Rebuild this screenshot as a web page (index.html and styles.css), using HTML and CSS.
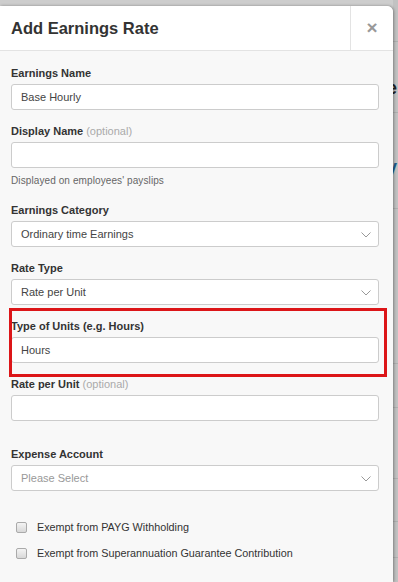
FILE: index.html
```html
<!DOCTYPE html>
<html lang="en">
<head>
    <meta charset="UTF-8">
    <meta name="viewport" content="width=device-width, initial-scale=1.0">
    <title>Add Earnings Rate</title>
    <link rel="stylesheet" href="styles.css">
</head>
<body>
    <div class="page">
        <div class="modal">
            <div class="modal-header">
                <h2>Add Earnings Rate</h2>
                <button class="close">&times;</button>
            </div>
            <div class="modal-body">
                <div class="field">
                    <label>Earnings Name</label>
                    <div class="input">Base Hourly</div>
                </div>
                <div class="field">
                    <label>Display Name <span class="optional">(optional)</span></label>
                    <div class="input"></div>
                    <p class="help">Displayed on employees' payslips</p>
                </div>
                <div class="field">
                    <label>Earnings Category</label>
                    <div class="input select">
                        <span>Ordinary time Earnings</span>
                        <svg class="chevron" width="10" height="6" viewBox="0 0 10 6"><path d="M0.5 0.5 L5 5 L9.5 0.5" fill="none" stroke="#999" stroke-width="1"/></svg>
                    </div>
                </div>
                <div class="field">
                    <label>Rate Type</label>
                    <div class="input select">
                        <span>Rate per Unit</span>
                        <svg class="chevron" width="10" height="6" viewBox="0 0 10 6"><path d="M0.5 0.5 L5 5 L9.5 0.5" fill="none" stroke="#999" stroke-width="1"/></svg>
                    </div>
                </div>
                <div class="field highlight">
                    <label>Type of Units (e.g. Hours)</label>
                    <div class="input">Hours</div>
                </div>
                <div class="field">
                    <label>Rate per Unit <span class="optional">(optional)</span></label>
                    <div class="input"></div>
                </div>
                <div class="field spaced">
                    <label>Expense Account</label>
                    <div class="input select placeholder">
                        <span>Please Select</span>
                        <svg class="chevron" width="10" height="6" viewBox="0 0 10 6"><path d="M0.5 0.5 L5 5 L9.5 0.5" fill="none" stroke="#999" stroke-width="1"/></svg>
                    </div>
                </div>
                <div class="checks">
                    <div class="check"><span class="box"></span>Exempt from PAYG Withholding</div>
                    <div class="check"><span class="box"></span>Exempt from Superannuation Guarantee Contribution</div>
                </div>
            </div>
        </div>
        <div class="backdrop">
            <div class="row r1"><span class="peek">e</span></div>
            <div class="row r2"><span class="peek blue">y</span></div>
            <div class="row r3"></div>
            <div class="row r4"></div>
            <div class="row r5"></div>
            <div class="row r6"></div>
            <div class="row r7"></div>
            <div class="row r8"></div>
        </div>
    </div>
</body>
</html>
```

FILE: styles.css
```css
body {
    margin: 0;
    background: #cdcdcd;
    font-family: "Liberation Sans", Arial, sans-serif;
    color: #333;
    overflow: hidden;
}
.page {
    display: flex;
    height: 582px;
}
.modal {
    width: 393px;
    flex: none;
    margin-top: 6px;
    background: #f8f8f8;
    border-radius: 0 6px 0 0;
    box-shadow: 1px 0 3px rgba(0, 0, 0, 0.35);
    position: relative;
    z-index: 1;
}
.modal-header {
    display: flex;
    height: 44px;
    background: #fff;
    border-bottom: 1px solid #e3e3e3;
    border-radius: 0 6px 0 0;
}
.modal-header h2 {
    flex: 1;
    margin: 0;
    padding-left: 11px;
    font-size: 16.5px;
    line-height: 44px;
    font-weight: bold;
    color: #333;
}
.close {
    width: 43px;
    border: none;
    border-left: 1px solid #e3e3e3;
    background: none;
    font-family: "Liberation Sans", Arial, sans-serif;
    font-size: 19px;
    font-weight: bold;
    color: #999;
    padding: 0;
    line-height: 44px;
}
.modal-body {
    padding: 14px 14px 0 11px;
}
.field {
    margin-bottom: 13px;
}
.field.spaced {
    margin-top: 25px;
}
label {
    display: block;
    font-size: 11px;
    font-weight: bold;
    line-height: 16px;
    margin-bottom: 3px;
    color: #333;
}
.optional {
    font-weight: normal;
    color: #aaa;
}
.input {
    display: flex;
    align-items: center;
    justify-content: space-between;
    box-sizing: border-box;
    height: 26px;
    padding: 0 7px 0 9px;
    background: #fff;
    border: 1px solid #ccc;
    border-radius: 3px;
    font-size: 11px;
    color: #444;
}
.placeholder {
    color: #999;
}
.chevron {
    margin-top: 1px;
}
.help {
    margin: 5px 0 0;
    font-size: 10px;
    line-height: 16px;
    letter-spacing: 0.1px;
    color: #666;
}
.highlight {
    position: relative;
}
.highlight::after {
    content: "";
    position: absolute;
    left: -2px;
    top: -10px;
    right: -8px;
    bottom: -14px;
    border: 3px solid #dc1518;
    pointer-events: none;
}
.checks {
    padding: 15px 0 0 5px;
}
.check {
    display: flex;
    align-items: center;
    font-size: 10.8px;
    line-height: 16px;
    color: #333;
    margin-bottom: 10px;
}
.box {
    width: 9px;
    height: 9px;
    margin-right: 10px;
    border: 1px solid #aaa;
    border-radius: 2px;
    background: linear-gradient(#f4f4f4, #d8d8d8);
}
.backdrop {
    flex: 1;
    background: #c2c2c2;
    overflow: hidden;
    padding-top: 41px;
}
.row {
    box-sizing: border-box;
    border-top: 1px solid #b0b0b0;
    font-size: 18px;
    color: #222;
}
.r1 { height: 71px; padding-top: 36px; line-height: 20px; }
.r2 { height: 96px; padding-top: 44px; line-height: 20px; }
.r3 { height: 155px; }
.r4 { height: 44px; }
.r5 { height: 71px; }
.r6 { height: 43px; }
.r7 { height: 36px; }
.r8 { height: 40px; }
.peek {
    margin-left: -6px;
    font-weight: bold;
}
.peek.blue {
    color: #1d5d8c;
}
```
